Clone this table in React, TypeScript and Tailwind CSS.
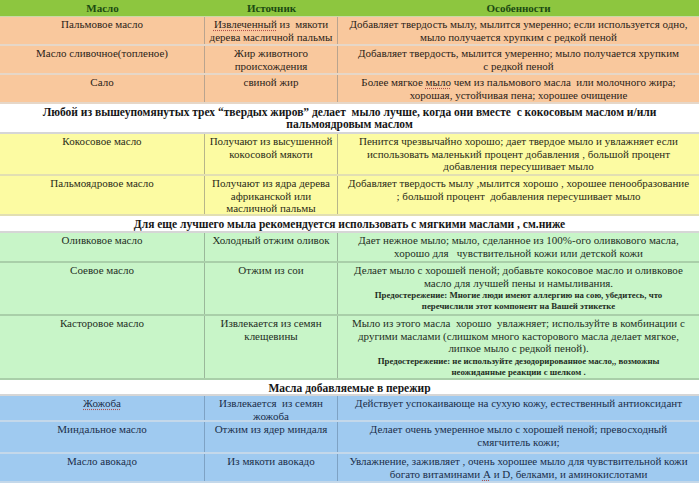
import React from 'react';

type Theme = 'peach' | 'yellow' | 'green' | 'blue';

const themeBg: Record<Theme, string> = {
  peach: 'bg-[#f9c89d] text-[#2b2318] border-[#e6d7c8]',
  yellow: 'bg-[#fcfba2] text-[#2b2b18] border-[#e2dfb2]',
  green: 'bg-[#c8f5c8] text-[#1f2e1f] border-[#a9cfa9]',
  blue: 'bg-[#9fcaf0] text-[#1b2e4a] border-[#c4d8ea]',
};

const colLine: Record<Theme, string> = {
  peach: 'border-[#b9a48f]',
  yellow: 'border-[#b7b58a]',
  green: 'border-[#9ab89a]',
  blue: 'border-[#7ea2c4]',
};

type DataRow = {
  kind: 'data';
  theme: Theme;
  h: string;
  oil: React.ReactNode;
  source: React.ReactNode;
  notes: React.ReactNode;
};

type NoteRow = { kind: 'note'; h: string; text: React.ReactNode };

const Caution = ({ children }: { children: React.ReactNode }) => (
  <div className="mt-[1px] text-[8.8px] font-bold leading-[11px]">{children}</div>
);

// spell-check style underline seen in the source document
const Squiggle = ({ children }: { children: React.ReactNode }) => (
  <span className="underline decoration-dotted decoration-[#b0504a] underline-offset-2">{children}</span>
);

const rows: (DataRow | NoteRow)[] = [
  {
    kind: 'data',
    theme: 'peach',
    h: 'h-[29px]',
    oil: 'Пальмовое масло',
    source: (
      <>
        <Squiggle>Извлеченный</Squiggle> из&nbsp; мякоти
        <br />
        дерева масличной пальмы
      </>
    ),
    notes: (
      <>
        Добавляет твердость мылу, мылится умеренно; если используется одно,
        <br />
        мыло получается хрупким с редкой пеной
      </>
    ),
  },
  {
    kind: 'data',
    theme: 'peach',
    h: 'h-[29px]',
    oil: 'Масло сливочное(топленое)',
    source: (
      <>
        Жир животного
        <br />
        происхождения
      </>
    ),
    notes: (
      <>
        Добавляет твердость, мылится умеренно; мыло получается хрупким
        <br />с редкой пеной
      </>
    ),
  },
  {
    kind: 'data',
    theme: 'peach',
    h: 'h-[29px]',
    oil: 'Сало',
    source: 'свиной жир',
    notes: (
      <>
        Более мягкое <Squiggle>мыло</Squiggle> чем из пальмового масла&nbsp; или молочного жира;
        <br />
        хорошая, устойчивая пена; хорошее очищение
      </>
    ),
  },
  {
    kind: 'note',
    h: 'h-[30px]',
    text: (
      <>
        Любой из вышеупомянутых трех “твердых жиров” делает&nbsp; мыло лучше, когда они вместе&nbsp; с кокосовым маслом и/или
        <br />
        пальмоядровым маслом
      </>
    ),
  },
  {
    kind: 'data',
    theme: 'yellow',
    h: 'h-[42px]',
    oil: 'Кокосовое масло',
    source: (
      <>
        Получают из высушенной
        <br />
        кокосовой мякоти
      </>
    ),
    notes: (
      <>
        Пенится чрезвычайно хорошо; дает твердое мыло и увлажняет если
        <br />
        использовать маленький процент добавления , большой процент
        <br />
        добавления пересушивает мыло
      </>
    ),
  },
  {
    kind: 'data',
    theme: 'yellow',
    h: 'h-[40px]',
    oil: 'Пальмоядровое масло',
    source: (
      <>
        Получают из ядра дерева
        <br />
        африканской или
        <br />
        масличной пальмы
      </>
    ),
    notes: (
      <>
        Добавляет твердость мылу ,мылится хорошо , хорошее пенообразование
        <br />; большой процент&nbsp; добавления пересушивает мыло
      </>
    ),
  },
  {
    kind: 'note',
    h: 'h-[17px]',
    text: 'Для еще лучшего мыла рекомендуется использовать с мягкими маслами , см.ниже',
  },
  {
    kind: 'data',
    theme: 'green',
    h: 'h-[30px]',
    oil: 'Оливковое масло',
    source: 'Холодный отжим оливок',
    notes: (
      <>
        Дает нежное мыло; мыло, сделанное из 100%-ого оливкового масла,
        <br />
        хорошо для&nbsp;&nbsp; чувствительной кожи или детской кожи
      </>
    ),
  },
  {
    kind: 'data',
    theme: 'green',
    h: 'h-[53px]',
    oil: 'Соевое масло',
    source: 'Отжим  из сои',
    notes: (
      <>
        Делает мыло с хорошей пеной; добавьте кокосовое масло и оливковое
        <br />
        масло для лучшей пены и намыливания.
        <Caution>
          Предостережение: Многие люди имеют аллергию на сою, убедитесь, что
          <br />
          перечислили этот компонент на Вашей этикетке
        </Caution>
      </>
    ),
  },
  {
    kind: 'data',
    theme: 'green',
    h: 'h-[64px]',
    oil: 'Касторовое масло',
    source: (
      <>
        Извлекается из семян
        <br />
        клещевины
      </>
    ),
    notes: (
      <>
        Мыло из этого масла&nbsp; хорошо&nbsp; увлажняет; используйте в комбинации с
        <br />
        другими маслами (слишком много касторового масла делает мягкое,
        <br />
        липкое мыло с редкой пеной).
        <Caution>
          Предостережение: не используйте дезодорированное масло,, возможны
          <br />
          неожиданные реакции с шелком .
        </Caution>
      </>
    ),
  },
  {
    kind: 'note',
    h: 'h-[16px]',
    text: (
      <>
        Масла добавляемые в <Squiggle>пережир</Squiggle>
      </>
    ),
  },
  {
    kind: 'data',
    theme: 'blue',
    h: 'h-[26px]',
    oil: <Squiggle>Жожоба</Squiggle>,
    source: (
      <>
        Извлекается&nbsp; из семян
        <br />
        <Squiggle>жожоба</Squiggle>
      </>
    ),
    notes: 'Действует   успокаивающе на сухую кожу, естественный антиоксидант',
  },
  {
    kind: 'data',
    theme: 'blue',
    h: 'h-[32px]',
    oil: 'Миндальное масло',
    source: 'Отжим из ядер миндаля',
    notes: (
      <>
        Делает очень умеренное мыло с хорошей пеной; превосходный
        <br />
        смягчитель кожи;
      </>
    ),
  },
  {
    kind: 'data',
    theme: 'blue',
    h: 'h-[29px]',
    oil: 'Масло авокадо',
    source: 'Из мякоти авокадо',
    notes: (
      <>
        Увлажнение, заживляет , очень хорошее мыло для чувствительной кожи
        <br />
        богато витаминами <Squiggle>А</Squiggle> и D, белками, и аминокислотами
      </>
    ),
  },
];

export default function App() {
  return (
    <div className="w-[699px] h-[483px] overflow-hidden bg-white font-['Liberation_Serif','Times_New_Roman','DejaVu_Serif',serif] text-[11px] leading-[12.5px]">
      {/* header */}
      <div className="grid grid-cols-[205px_133px_1fr] h-[17px] bg-[#8dc63f] text-[#1b4a12] font-bold text-center items-center border-b border-[#c9d9a8]">
        <div>Масло</div>
        <div>Источник</div>
        <div>Особенности</div>
      </div>

      {rows.map((row, i) =>
        row.kind === 'note' ? (
          <div
            key={i}
            className={`${row.h} bg-white text-[#161616] font-bold text-[11.5px] leading-[12px] text-center whitespace-nowrap pt-[2px] border-b-2 border-[#d6d6d6] overflow-hidden`}
          >
            {row.text}
          </div>
        ) : (
          <div
            key={i}
            className={`${row.h} grid grid-cols-[205px_133px_1fr] text-center whitespace-nowrap border-b-2 overflow-hidden ${themeBg[row.theme]}`}
          >
            <div className={`border-r ${colLine[row.theme]} pt-[1px]`}>{row.oil}</div>
            <div className={`border-r ${colLine[row.theme]} pt-[1px]`}>{row.source}</div>
            <div className="pt-[1px]">{row.notes}</div>
          </div>
        )
      )}
    </div>
  );
}
